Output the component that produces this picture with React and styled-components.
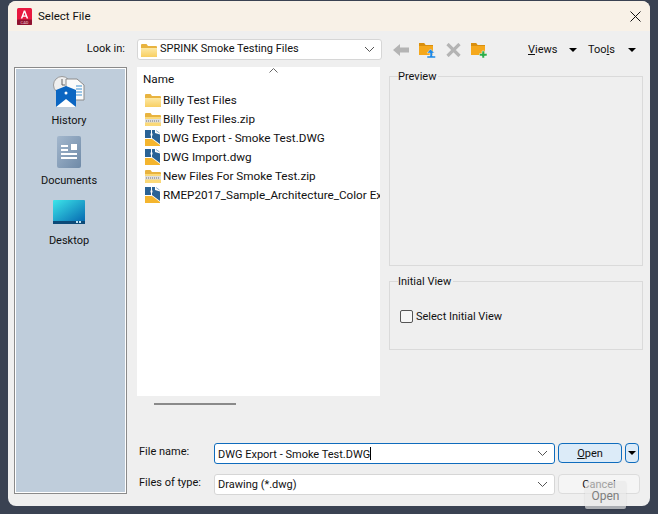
import React from "react"
import styled, { createGlobalStyle } from "styled-components"

const GlobalStyle = createGlobalStyle`
  html, body {
    margin: 0;
    padding: 0;
    background: #3a4252;
  }
  body {
    font-family: Roboto, "Noto Sans", "Liberation Sans", sans-serif;
    font-size: 11px;
    color: #111;
  }
  svg {
    flex: none;
  }
`

const Screen = styled.div`
  width: 658px;
  height: 514px;
  padding: 1px 0 0 8px;
  box-sizing: border-box;
  overflow: hidden;
  position: relative;
`

const Window = styled.div`
  width: 642px;
  height: 505px;
  background: #efefef;
  border-radius: 8px;
  overflow: hidden;
`

const TitleBar = styled.div`
  height: 30px;
  background: #f8f1e7;
  display: flex;
  align-items: center;
  padding: 0 9px;
  gap: 6px;
  font-size: 11.5px;
`

const TitleText = styled.span`
  flex: 1;
`

const Body = styled.div`
  display: grid;
  grid-template-columns: 113px 1fr;
  grid-template-rows: 23px 427px;
  column-gap: 10px;
  row-gap: 6px;
  padding: 7px 7px 0 6px;
`

const Toolbar = styled.div`
  grid-column: 1 / 3;
  display: flex;
  align-items: center;
`

const LookIn = styled.label`
  width: 111px;
  text-align: right;
  margin-right: 12px;
  position: relative;
  top: -1px;
`

const Combo = styled.div`
  width: ${(p) => p.$width}px;
  height: 21px;
  box-sizing: border-box;
  display: flex;
  align-items: center;
  gap: 3px;
  padding: 0 6px 0 3px;
  background: #fff;
  border: 1px solid ${(p) => (p.$active ? "#0f6cbd" : "#d6d6d6")};
  border-radius: 3px;
`

const ComboText = styled.span`
  flex: 1;
  white-space: nowrap;
  position: relative;
  top: ${(p) => p.$top ?? -1}px;
`

const Caret = styled.span`
  display: inline-block;
  width: 0;
  height: 0;
  border-left: 4px solid transparent;
  border-right: 4px solid transparent;
  border-top: 4px solid #000;
`

const ToolIcons = styled.div`
  display: flex;
  align-items: center;
  gap: 10px;
  margin-left: 11px;
  width: 135px;
`

const MenuLabel = styled.span`
  width: ${(p) => p.$width}px;
  margin-left: ${(p) => p.$left || 0}px;
  display: flex;
  align-items: center;
  justify-content: space-between;
`

const Sidebar = styled.nav`
  background: #bfcddb;
  border: 1px solid #8a8a8a;
  outline: 1px solid #fff;
  outline-offset: -2px;
  box-sizing: border-box;
  padding-right: 3px;
  display: flex;
  flex-direction: column;
`

const Place = styled.div`
  height: 60px;
  padding-bottom: 1px;
  box-sizing: border-box;
  display: flex;
  flex-direction: column;
  align-items: center;
  justify-content: flex-end;
  gap: ${(p) => p.$gap}px;
`

const Content = styled.div`
  display: flex;
  flex-direction: column;
`

const Panes = styled.div`
  display: flex;
  gap: 9px;
  height: 340px;
`

const ListColumn = styled.div`
  width: 243px;
`

const FileList = styled.div`
  height: 329px;
  background: #fff;
  overflow: hidden;
  position: relative;
  padding: 4px 0 0 6px;
  box-sizing: border-box;
  font-size: 11.7px;
`

const SortArrow = styled.svg`
  position: absolute;
  left: 132px;
  top: 1px;
`

const ColumnHead = styled.div`
  height: 17px;
  line-height: 17px;
  margin-bottom: 2px;
`

const FileRow = styled.div`
  height: 19px;
  display: flex;
  align-items: center;
  gap: 2px;
  padding-left: 2px;
  white-space: nowrap;
`

const ScrollTrack = styled.div`
  margin: 7px 0 0 17px;
  width: 82px;
  height: 2px;
  background: #8a8a8a;
`

const PreviewColumn = styled.div`
  width: 254px;
  padding-top: 3px;
  display: flex;
  flex-direction: column;
  gap: 9px;
`

const Group = styled.fieldset`
  margin: 0;
  padding: 0 0 0 10px;
  height: ${(p) => p.$height}px;
  box-sizing: border-box;
  border: 1px solid #dadada;
  min-inline-size: 0;

  legend {
    padding: 0 2px 0 0;
    margin-left: -2px;
    line-height: 14px;
    height: 12px;
  }
`

const CheckRow = styled.div`
  display: flex;
  align-items: center;
  gap: 3px;
  margin-top: 23px;
`

const CheckBox = styled.span`
  width: 11px;
  height: 11px;
  border: 1px solid #555;
  border-radius: 2px;
  background: #f6f6f6;
`

const Footer = styled.div`
  margin-top: 38px;
  display: flex;
  flex-direction: column;
  gap: 10px;
`

const FooterRow = styled.div`
  display: flex;
  align-items: center;
  height: 21px;
`

const FieldLabel = styled.label`
  width: 77px;
  padding-left: 2px;
  box-sizing: border-box;
  position: relative;
  top: -2px;
`

const Cursor = styled.span`
  display: inline-block;
  width: 1px;
  height: 13px;
  background: #000;
  vertical-align: -2px;
`

const Button = styled.button`
  font: inherit;
  color: inherit;
  height: 20px;
  padding: 1px 0 0;
  margin: -2px 0 0 3px;
  width: ${(p) => p.$width}px;
  border-radius: 4px;
  border: 1px solid ${(p) => (p.$primary ? "#0f6cbd" : "#dcdcdc")};
  background: ${(p) => (p.$primary ? "#dcebf8" : "#f5f5f5")};
  display: flex;
  align-items: center;
  justify-content: center;
`

const Underlined = styled.span`
  text-decoration: underline;
`

const Tooltip = styled.div`
  position: absolute;
  left: 585px;
  top: 481px;
  width: 41px;
  height: 28px;
  box-sizing: border-box;
  padding-top: 8px;
  text-align: center;
  font-size: 12px;
  background: rgba(232, 232, 232, 0.65);
  color: #7d7d7d;
  border-radius: 2px;
  box-shadow: 0 1px 2px rgba(0, 0, 0, 0.12);
`

function Chevron() {
  return (
    <svg width="11" height="7" viewBox="0 0 11 7">
      <path d="M1 1l4.500 4.500L10 1" fill="none" stroke="#555" strokeWidth="1" />
    </svg>
  )
}

function AppIcon() {
  return (
    <svg width="15" height="17" viewBox="0 0 15 17">
      <rect x="0" y="0" width="15" height="17" rx="1.500" fill="#e8183f" />
      <rect x="0" y="11.500" width="15" height="5.500" rx="1" fill="#8f1230" />
      <path d="M3.800 10.500L6.800 2.500h1.400L11.200 10.500H9.600L9 8.800H6L5.400 10.500zM6.500 7.500h2L7.500 4.500z" fill="#fff" />
      <text x="7.500" y="15.800" fontSize="4" textAnchor="middle" fill="#f3c9d2">CAD</text>
    </svg>
  )
}

function Folder() {
  return (
    <svg width="16" height="14" viewBox="0 0 16 14">
      <defs>
        <linearGradient id="folderFill" x1="0" y1="0" x2="0" y2="1">
          <stop offset="0" stopColor="#fde9a6" />
          <stop offset="1" stopColor="#f8cf62" />
        </linearGradient>
      </defs>
      <path d="M0 2a1 1 0 011-1h4.500l1.500 2h8a1 1 0 011 1v9a1 1 0 01-1 1H1a1 1 0 01-1-1z" fill="#e8b33f" />
      <path d="M0 5h16v8a1 1 0 01-1 1H1a1 1 0 01-1-1z" fill="url(#folderFill)" />
    </svg>
  )
}

function ZipFolder() {
  return (
    <svg width="16" height="14" viewBox="0 0 16 14">
      <path d="M0 2a1 1 0 011-1h4.500l1.500 2h8a1 1 0 011 1v9a1 1 0 01-1 1H1a1 1 0 01-1-1z" fill="#e8b33f" />
      <path d="M0 5h16v8a1 1 0 01-1 1H1a1 1 0 01-1-1z" fill="#fbd977" />
      <rect x="0" y="7" width="16" height="3.500" fill="#dedede" />
      <path d="M1 9h14" stroke="#777" strokeDasharray="1 1" />
    </svg>
  )
}

function DwgFile() {
  return (
    <svg width="16" height="16" viewBox="0 0 16 16">
      <rect x="0" y="0" width="15" height="16" fill="#fff" />
      <path d="M0 0h10v3l5 1.500V14L7 8H0z" fill="#2a6396" />
      <path d="M0 9h7l8 6v1H0z" fill="#f4b52e" />
      <path d="M6.500 0v8" stroke="#fff" strokeWidth="1" />
      <rect x="5.500" y="3.500" width="2" height="2" fill="#fff" />
      <path d="M11 0.500l3.500 2.500" stroke="#8fb3d1" fill="none" />
    </svg>
  )
}

function BackIcon() {
  return (
    <svg width="16" height="12" viewBox="0 0 16 12">
      <path d="M0 6l7-6v3.500h9v5H7V12z" fill="#b4b4b4" />
    </svg>
  )
}

function FolderBadge({ badge }) {
  return (
    <svg width="17" height="16" viewBox="0 0 17 16">
      <path d="M0 1h5l1.500 2H14v10H0z" fill="#f5a81c" />
      <path d="M0 1h5l1.500 2H14v1H0z" fill="#d98f0e" />
      {badge === "up" ? (
        <path d="M11.500 7l4 4h-2v3h3v2H8v-2h3v-3H8z" fill="#1e88e5" stroke="#f5f5f5" strokeWidth="0.500" />
      ) : (
        <path d="M11 9h2.500v2.500H16V14h-2.500v2H11v-2H8.500v-2.500H11z" fill="#2cae4a" stroke="#f5f5f5" strokeWidth="0.500" />
      )}
    </svg>
  )
}

function DeleteIcon() {
  return (
    <svg width="15" height="14" viewBox="0 0 15 14">
      <path d="M1.500 1l12 12M13.500 1l-12 12" stroke="#b4b4b4" strokeWidth="3.200" />
    </svg>
  )
}

function HistoryIcon() {
  return (
    <svg width="32" height="33" viewBox="0 0 32 33">
      <circle cx="9" cy="10" r="8.500" fill="#efefef" stroke="#9a9a9a" />
      <path d="M9 4v6h3" fill="none" stroke="#666" />
      <path d="M13 4h11l7 6v15H13z" fill="#fafafa" stroke="#8c8c8c" />
      <path d="M23 11h6M23 14h6M23 17h6M23 20h6" stroke="#3a8fd1" />
      <path d="M3 15l10-4 10 4v17H3z" fill="#0b66c2" />
      <path d="M3 32l10-8 10 8z" fill="#fff" />
      <circle cx="13" cy="18" r="1.500" fill="#fff" />
    </svg>
  )
}

function DocumentsIcon() {
  return (
    <svg width="24" height="32" viewBox="0 0 24 32">
      <defs>
        <linearGradient id="docFill" x1="0" y1="0" x2="1" y2="1">
          <stop offset="0" stopColor="#a3b7cd" />
          <stop offset="1" stopColor="#6f8aa7" />
        </linearGradient>
      </defs>
      <rect width="24" height="32" rx="2" fill="url(#docFill)" />
      <path d="M4 9h7v2H4zM4 13h7v2H4zM14 8h6v6h-6zM4 17h16v2H4zM4 21h16v2H4z" fill="#fff" />
    </svg>
  )
}

function DesktopIcon() {
  return (
    <svg width="32" height="24" viewBox="0 0 32 24">
      <defs>
        <linearGradient id="deskFill" x1="0" y1="0" x2="1" y2="1">
          <stop offset="0" stopColor="#3ce6ea" />
          <stop offset="1" stopColor="#0567b0" />
        </linearGradient>
      </defs>
      <rect width="32" height="22" rx="1" fill="url(#deskFill)" />
      <rect y="21" width="32" height="3" fill="#0c4a78" />
      <path d="M23 21h2v2h-2zM26 21h2v2h-2z" fill="#bfe3f2" />
    </svg>
  )
}

const files = [
  { name: "Billy Test Files", icon: <Folder /> },
  { name: "Billy Test Files.zip", icon: <ZipFolder /> },
  { name: "DWG Export - Smoke Test.DWG", icon: <DwgFile /> },
  { name: "DWG Import.dwg", icon: <DwgFile /> },
  { name: "New Files For Smoke Test.zip", icon: <ZipFolder /> },
  { name: "RMEP2017_Sample_Architecture_Color Ex", icon: <DwgFile /> },
]

export default function App() {
  return (
    <Screen>
      <GlobalStyle />
      <Window>
        <TitleBar>
          <AppIcon />
          <TitleText>Select File</TitleText>
          <svg width="11" height="11" viewBox="0 0 11 11">
            <path d="M0.500 0.500l10 10M10.500 0.500l-10 10" stroke="#111" />
          </svg>
        </TitleBar>
        <Body>
          <Toolbar>
            <LookIn>Look in:</LookIn>
            <Combo $width={245}>
              <Folder />
              <ComboText>SPRINK Smoke Testing Files</ComboText>
              <Chevron />
            </Combo>
            <ToolIcons>
              <BackIcon />
              <FolderBadge badge="up" />
              <DeleteIcon />
              <FolderBadge badge="plus" />
            </ToolIcons>
            <MenuLabel $width={49}>
              <span>
                <Underlined>V</Underlined>iews
              </span>
              <Caret />
            </MenuLabel>
            <MenuLabel $width={48} $left={11}>
              <span>
                Too<Underlined>l</Underlined>s
              </span>
              <Caret />
            </MenuLabel>
          </Toolbar>
          <Sidebar>
            <Place $gap={6}>
              <HistoryIcon />
              <span>History</span>
            </Place>
            <Place $gap={6}>
              <DocumentsIcon />
              <span>Documents</span>
            </Place>
            <Place $gap={10}>
              <DesktopIcon />
              <span>Desktop</span>
            </Place>
          </Sidebar>
          <Content>
            <Panes>
              <ListColumn>
                <FileList>
                  <SortArrow width="9" height="5" viewBox="0 0 9 5">
                    <path d="M0.500 4.500l4-4 4 4" fill="none" stroke="#666" />
                  </SortArrow>
                  <ColumnHead>Name</ColumnHead>
                  {files.map((file) => (
                    <FileRow key={file.name}>
                      {file.icon}
                      <span>{file.name}</span>
                    </FileRow>
                  ))}
                </FileList>
                <ScrollTrack />
              </ListColumn>
              <PreviewColumn>
                <Group $height={196}>
                  <legend>Preview</legend>
                </Group>
                <Group $height={75}>
                  <legend>Initial View</legend>
                  <CheckRow>
                    <CheckBox />
                    <span>Select Initial View</span>
                  </CheckRow>
                </Group>
              </PreviewColumn>
            </Panes>
            <Footer>
              <FooterRow>
                <FieldLabel>File name:</FieldLabel>
                <Combo $width={341} $active>
                  <ComboText $top={0}>
                    DWG Export - Smoke Test.DWG
                    <Cursor />
                  </ComboText>
                  <Chevron />
                </Combo>
                <Button $primary $width={64}>
                  <span>
                    <Underlined>O</Underlined>pen
                  </span>
                </Button>
                <Button $primary $width={14}>
                  <Caret />
                </Button>
              </FooterRow>
              <FooterRow>
                <FieldLabel>Files of type:</FieldLabel>
                <Combo $width={341}>
                  <ComboText $top={0}>Drawing (*.dwg)</ComboText>
                  <Chevron />
                </Combo>
                <Button $width={82}>Cancel</Button>
              </FooterRow>
            </Footer>
          </Content>
        </Body>
      </Window>
      <Tooltip>Open</Tooltip>
    </Screen>
  )
}
